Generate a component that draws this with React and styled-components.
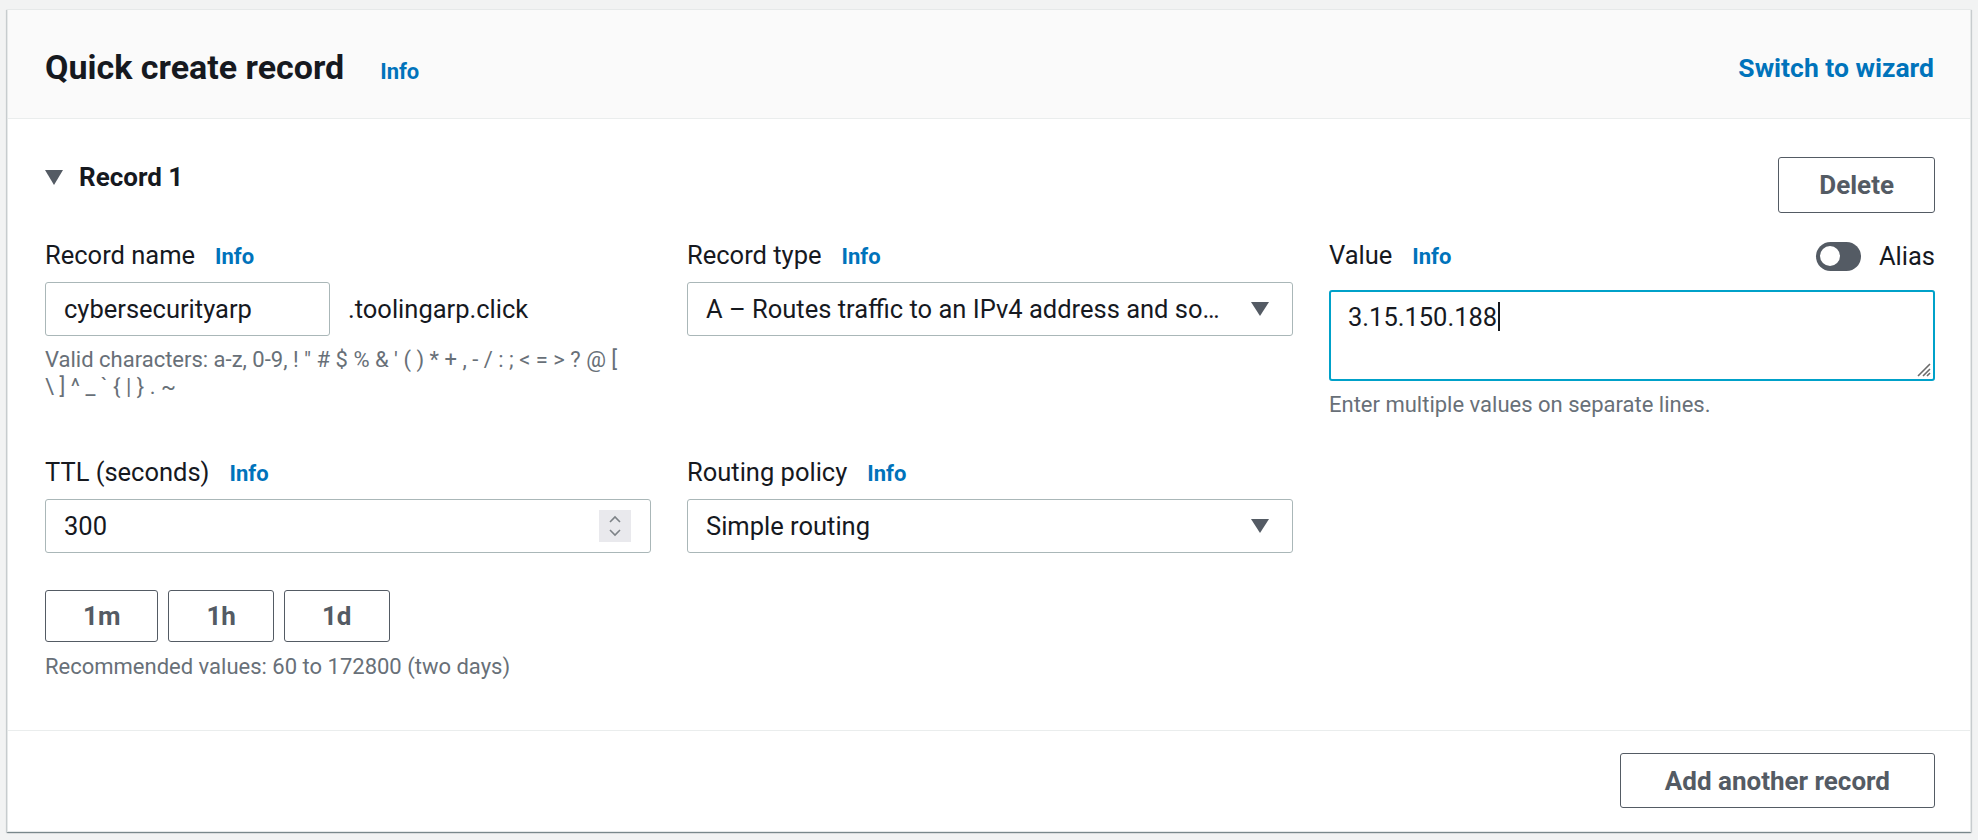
import React from "react";
import styled, { createGlobalStyle } from "styled-components";

const GlobalStyle = createGlobalStyle`
  html, body {
    margin: 0;
    padding: 0;
    background: #f2f3f3;
  }
  body {
    font-family: Roboto, "Liberation Sans", Arial, sans-serif;
    color: #16191f;
  }
  * {
    box-sizing: border-box;
  }
`;

function App() {
  return (
    <Page>
      <GlobalStyle />
      <Card>
        <Header>
          <TitleGroup>
            <Title>Quick create record</Title>
            <InfoLink href="#">Info</InfoLink>
          </TitleGroup>
          <HeaderLink href="#">Switch to wizard</HeaderLink>
        </Header>

        <Body>
          <RecordHead>
            <RecordTitle>
              <svg width="18" height="15" viewBox="0 0 18 15">
                <path d="M0 0 H18 L9 15 Z" fill="#545b64" />
              </svg>
              Record 1
            </RecordTitle>
            <Button $h={56} $px={40}>Delete</Button>
          </RecordHead>

          <Grid>
            {/* record name */}
            <Field>
              <LabelRow>
                <Label>
                  Record name <InfoLink href="#">Info</InfoLink>
                </Label>
              </LabelRow>
              <InputRow>
                <TextBox $w="285px">cybersecurityarp</TextBox>
                <Suffix>.toolingarp.click</Suffix>
              </InputRow>
              <Help $max={580}>
                Valid characters: a-z, 0-9, ! " # $ % &amp; ' ( ) * + , - / : ; &lt; = &gt; ? @ [ \ ] ^ _ ` {"{"} | {"}"} . ~
              </Help>
            </Field>

            {/* record type */}
            <Field>
              <LabelRow>
                <Label>
                  Record type <InfoLink href="#">Info</InfoLink>
                </Label>
              </LabelRow>
              <TextBox>
                <span>A – Routes traffic to an IPv4 address and so…</span>
                <Caret />
              </TextBox>
            </Field>

            {/* value */}
            <Field>
              <LabelRow $gap={18}>
                <Label>
                  Value <InfoLink href="#">Info</InfoLink>
                </Label>
                <ToggleWrap>
                  <Toggle />
                  Alias
                </ToggleWrap>
              </LabelRow>
              <TextArea>
                3.15.150.188<Cursor />
                <Grip width="16" height="16" viewBox="0 0 16 16">
                  <path
                    d="M15 3 L3 15 M15 8 L8 15 M15 12 L12 15"
                    stroke="#6b6b6b"
                    strokeWidth="1.6"
                  />
                </Grip>
              </TextArea>
              <Help>Enter multiple values on separate lines.</Help>
            </Field>

            {/* ttl */}
            <Field>
              <LabelRow>
                <Label>
                  TTL (seconds) <InfoLink href="#">Info</InfoLink>
                </Label>
              </LabelRow>
              <TextBox>
                300
                <Spinner>
                  <svg width="14" height="24" viewBox="0 0 14 24">
                    <path
                      d="M2 8 L7 3 L12 8 M2 16 L7 21 L12 16"
                      fill="none"
                      stroke="#7d8287"
                      strokeWidth="1.6"
                    />
                  </svg>
                </Spinner>
              </TextBox>
              <QuickRow>
                <Button $h={52} $px={37}>1m</Button>
                <Button $h={52} $px={37}>1h</Button>
                <Button $h={52} $px={37}>1d</Button>
              </QuickRow>
              <Help $top={11}>Recommended values: 60 to 172800 (two days)</Help>
            </Field>

            {/* routing policy */}
            <Field>
              <LabelRow>
                <Label>
                  Routing policy <InfoLink href="#">Info</InfoLink>
                </Label>
              </LabelRow>
              <TextBox>
                <span>Simple routing</span>
                <Caret />
              </TextBox>
            </Field>
          </Grid>
        </Body>

        <Footer>
          <Button $h={55} $px={44}>Add another record</Button>
        </Footer>
      </Card>
    </Page>
  );
}

//styled components
const Page = styled.div`
  padding: 9px 7px;
`;
const Card = styled.div`
  background: #fff;
  border: 1px solid #e6e9e9;
  box-shadow: 0 1px 1px 0 rgba(0, 28, 36, 0.35),
    1px 1px 1px 0 rgba(0, 28, 36, 0.12), -1px 1px 1px 0 rgba(0, 28, 36, 0.12);
`;
const Header = styled.div`
  height: 109px;
  background: #fafafa;
  border-bottom: 1px solid #eaeded;
  display: flex;
  align-items: center;
  justify-content: space-between;
  padding: 7px 36px 0 37px;
`;
const TitleGroup = styled.div`
  display: flex;
  align-items: baseline;
  gap: 36px;
`;
const Title = styled.h2`
  margin: 0;
  font-size: 34px;
  font-weight: 700;
  line-height: 1.2;
`;
const InfoLink = styled.a`
  color: #0073bb;
  font-weight: 700;
  font-size: 22px;
  text-decoration: none;
`;
const HeaderLink = styled.a`
  color: #0073bb;
  font-weight: 700;
  font-size: 26.5px;
  line-height: 1.2;
  text-decoration: none;
`;
const Body = styled.div`
  padding: 38px 35px 50px 37px;
`;
const RecordHead = styled.div`
  display: flex;
  justify-content: space-between;
  align-items: flex-start;
`;
const RecordTitle = styled.div`
  display: flex;
  align-items: center;
  gap: 16px;
  margin-top: 4px;
  font-size: 26px;
  font-weight: 700;
  line-height: 1.3;
`;
const Button = styled.button`
  height: ${(p) => p.$h}px;
  padding: 0 ${(p) => p.$px}px;
  border: 1px solid #545b64;
  border-radius: 3px;
  background: #fff;
  color: #545b64;
  font-family: Roboto, "Liberation Sans", Arial, sans-serif;
  font-size: 26px;
  font-weight: 700;
  cursor: pointer;
`;
const Grid = styled.div`
  display: grid;
  grid-template-columns: repeat(3, minmax(0, 1fr));
  column-gap: 36px;
  row-gap: 39px;
  margin-top: 27px;
`;
const Field = styled.div`
  display: flex;
  flex-direction: column;
  min-width: 0;
`;
const LabelRow = styled.div`
  display: flex;
  align-items: center;
  justify-content: space-between;
  height: 32px;
  margin-bottom: ${(p) => p.$gap ?? 10}px;
`;
const Label = styled.div`
  display: flex;
  align-items: baseline;
  gap: 20px;
  font-size: 25.5px;
  line-height: 32px;
`;
const InputRow = styled.div`
  display: flex;
  align-items: center;
  gap: 18px;
  font-size: 25.5px;
`;
const Suffix = styled.span`
  white-space: nowrap;
`;
const TextBox = styled.div`
  width: ${(p) => p.$w || "100%"};
  height: 54px;
  border: 1px solid #aab7b8;
  border-radius: 3px;
  padding: 0 19px 0 18px;
  display: flex;
  align-items: center;
  justify-content: space-between;
  gap: 20px;
  font-size: 25.5px;
  white-space: nowrap;
  background: #fff;
`;
const Caret = styled.span`
  flex: none;
  width: 0;
  height: 0;
  margin-right: 4px;
  border-left: 9.5px solid transparent;
  border-right: 9.5px solid transparent;
  border-top: 14px solid #545b64;
`;
const Spinner = styled.span`
  flex: none;
  width: 32px;
  height: 32px;
  background: #e9e9ed;
  display: flex;
  align-items: center;
  justify-content: center;
`;
const TextArea = styled.div`
  position: relative;
  height: 91px;
  border: 2px solid #00a1c9;
  border-radius: 3px;
  padding: 9px 17px;
  font-size: 25.5px;
  line-height: 33px;
`;
const Cursor = styled.span`
  display: inline-block;
  width: 1.5px;
  height: 29px;
  margin-left: 1px;
  vertical-align: -5px;
  background: #16191f;
`;
const Grip = styled.svg`
  position: absolute;
  right: 2px;
  bottom: 2px;
`;
const ToggleWrap = styled.label`
  display: flex;
  align-items: center;
  gap: 18px;
  font-size: 25.5px;
`;
const Toggle = styled.span`
  position: relative;
  width: 45px;
  height: 29px;
  border-radius: 15px;
  background: #545b64;

  &::after {
    content: "";
    position: absolute;
    left: 4px;
    top: 4.5px;
    width: 20px;
    height: 20px;
    border-radius: 50%;
    background: #fff;
  }
`;
const Help = styled.div`
  margin-top: ${(p) => p.$top ?? 10}px;
  max-width: ${(p) => (p.$max ? `${p.$max}px` : "none")};
  font-size: 22px;
  line-height: 27px;
  color: #687078;
`;
const QuickRow = styled.div`
  display: flex;
  gap: 10px;
  margin-top: 37px;
`;
const Footer = styled.div`
  border-top: 1px solid #eaeded;
  padding: 22px 35px 23px;
  display: flex;
  justify-content: flex-end;
`;

export default App;
